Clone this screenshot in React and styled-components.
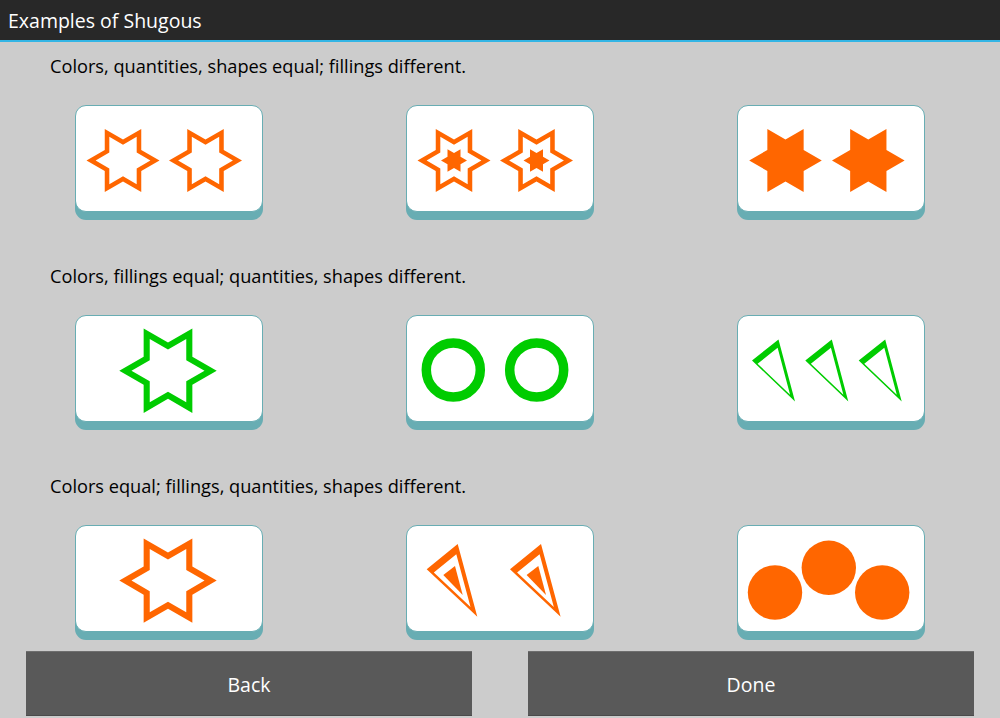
import styled, { createGlobalStyle } from "styled-components";

const ORANGE = "#ff6600";
const GREEN = "#00cc00";
const TEAL = "#68adb3";

const GlobalStyle = createGlobalStyle`
  html, body {
    margin: 0;
    padding: 0;
    background: #cccccc;
    font-family: "Open Sans", "Noto Sans", sans-serif;
  }
`;

// six pointed star, points left/right
function starPoints(cx, cy, r) {
  const pts = [];
  const inner = r / Math.sqrt(3);
  for (let i = 0; i < 12; i++) {
    const a = (i * Math.PI) / 6;
    const rr = i % 2 === 0 ? r : inner;
    pts.push([cx + rr * Math.cos(a), cy + rr * Math.sin(a)]);
  }
  return pts;
}

const toPath = (pts) =>
  "M" + pts.map((p) => p[0].toFixed(2) + " " + p[1].toFixed(2)).join(" L") + " Z";

// triangle whose edges are pushed inwards by a different amount each
function insetTriangle(p, d) {
  const c = [(p[0][0] + p[1][0] + p[2][0]) / 3, (p[0][1] + p[1][1] + p[2][1]) / 3];
  const lines = [0, 1, 2].map((i) => {
    const a = p[i];
    const b = p[(i + 1) % 3];
    const dir = [b[0] - a[0], b[1] - a[1]];
    const len = Math.hypot(dir[0], dir[1]);
    let n = [-dir[1] / len, dir[0] / len];
    if (n[0] * (c[0] - a[0]) + n[1] * (c[1] - a[1]) < 0) n = [-n[0], -n[1]];
    return { pt: [a[0] + n[0] * d[i], a[1] + n[1] * d[i]], dir };
  });
  const cross = (u, v) => u[0] * v[1] - u[1] * v[0];
  return [0, 1, 2].map((i) => {
    const l1 = lines[(i + 2) % 3];
    const l2 = lines[i];
    const diff = [l2.pt[0] - l1.pt[0], l2.pt[1] - l1.pt[1]];
    const t = cross(diff, l2.dir) / cross(l1.dir, l2.dir);
    return [l1.pt[0] + t * l1.dir[0], l1.pt[1] + t * l1.dir[1]];
  });
}

const shift = (pts, dx) => pts.map((p) => [p[0] + dx, p[1]]);

function Shape({ s, color }) {
  switch (s.type) {
    case "starOutline": {
      const outer = starPoints(s.cx, s.cy, s.r);
      const inner = starPoints(s.cx, s.cy, s.r * 0.75);
      return <path d={toPath(outer) + toPath(inner)} fill={color} fillRule="evenodd" />;
    }
    case "starFill":
      return <path d={toPath(starPoints(s.cx, s.cy, s.r))} fill={color} />;
    case "ring":
      return <circle cx={s.cx} cy={s.cy} r={s.r} fill="none" stroke={color} strokeWidth={s.w} />;
    case "circle":
      return <circle cx={s.cx} cy={s.cy} r={s.r} fill={color} />;
    case "triOutline": {
      const outer = shift(s.pts, s.dx);
      const inner = insetTriangle(outer, s.d);
      return <path d={toPath(outer) + toPath(inner)} fill={color} fillRule="evenodd" />;
    }
    case "triFill":
      return <path d={toPath(shift(s.pts, s.dx))} fill={color} />;
    default:
      return null;
  }
}

const greenTri = [[15, 45.5], [41.5, 24.5], [58, 86.5]];
const orangeTri = [[20.7, 44.3], [51.7, 19], [71.3, 91.7]];
const orangeTriInner = [[37.3, 50], [49, 41], [56.7, 70]];

const rows = [
  {
    label: "Colors, quantities, shapes equal; fillings different.",
    cards: [
      {
        color: ORANGE,
        shapes: [
          { type: "starOutline", cx: 48, cy: 55.5, r: 36.5 },
          { type: "starOutline", cx: 130.5, cy: 55.5, r: 36.5 },
        ],
      },
      {
        color: ORANGE,
        shapes: [
          { type: "starOutline", cx: 48, cy: 55.5, r: 36.5 },
          { type: "starFill", cx: 48, cy: 55.5, r: 13 },
          { type: "starOutline", cx: 130.5, cy: 55.5, r: 36.5 },
          { type: "starFill", cx: 130.5, cy: 55.5, r: 13 },
        ],
      },
      {
        color: ORANGE,
        shapes: [
          { type: "starFill", cx: 48.5, cy: 55.5, r: 36.3 },
          { type: "starFill", cx: 131.3, cy: 55.5, r: 36.3 },
        ],
      },
    ],
  },
  {
    label: "Colors, fillings equal; quantities, shapes different.",
    cards: [
      {
        color: GREEN,
        shapes: [{ type: "starOutline", cx: 93, cy: 55.7, r: 48.7 }],
      },
      {
        color: GREEN,
        shapes: [
          { type: "ring", cx: 47.3, cy: 55, r: 27, w: 9.5 },
          { type: "ring", cx: 130.7, cy: 55, r: 27, w: 9.5 },
        ],
      },
      {
        color: GREEN,
        shapes: [0, 53.3, 106.7].map((dx) => ({
          type: "triOutline",
          pts: greenTri,
          dx,
          d: [6, 3, 1.5],
        })),
      },
    ],
  },
  {
    label: "Colors equal; fillings, quantities, shapes different.",
    cards: [
      {
        color: ORANGE,
        shapes: [{ type: "starOutline", cx: 93, cy: 55.6, r: 48.7 }],
      },
      {
        color: ORANGE,
        shapes: [0, 83.3].flatMap((dx) => [
          { type: "triOutline", pts: orangeTri, dx, d: [7, 4, 2.5] },
          { type: "triFill", pts: orangeTriInner, dx },
        ]),
      },
      {
        color: ORANGE,
        shapes: [
          { type: "circle", cx: 38, cy: 67.5, r: 27.2 },
          { type: "circle", cx: 91.8, cy: 42.8, r: 27.2 },
          { type: "circle", cx: 145.2, cy: 67.5, r: 27.2 },
        ],
      },
    ],
  },
];

export default function App() {
  return (
    <>
      <GlobalStyle />
      <Screen>
        <Header>
          <Title>Examples of Shugous</Title>
        </Header>
        <Content>
          {rows.map((row) => (
            <Section key={row.label}>
              <Label>{row.label}</Label>
              <CardRow>
                {row.cards.map((card, i) => (
                  <Card key={i}>
                    <svg width="186" height="105" viewBox="1 1 186 105">
                      {card.shapes.map((s, j) => (
                        <Shape key={j} s={s} color={card.color} />
                      ))}
                    </svg>
                  </Card>
                ))}
              </CardRow>
            </Section>
          ))}
        </Content>
        <Footer>
          <FooterButton>Back</FooterButton>
          <FooterButton>Done</FooterButton>
        </Footer>
      </Screen>
    </>
  );
}

const Screen = styled.div`
  width: 1000px;
  height: 718px;
  display: flex;
  flex-direction: column;
  background: #cccccc;
  overflow: hidden;
`;

const Header = styled.div`
  height: 40px;
  flex-shrink: 0;
  background: #282828;
  border-bottom: 2px solid #33b5e5;
  display: flex;
  align-items: center;
  padding-left: 8px;
`;

const Title = styled.h1`
  margin: 0;
  font-size: 19.5px;
  font-weight: 400;
  color: #ffffff;
`;

const Content = styled.div`
  padding-top: 12px;
  display: flex;
  flex-direction: column;
  gap: 52px;
`;

const Section = styled.div`
  display: flex;
  flex-direction: column;
`;

const Label = styled.p`
  margin: 0 0 27px 50px;
  height: 24px;
  line-height: 24px;
  font-size: 18.2px;
  color: #000000;
`;

const CardRow = styled.div`
  display: grid;
  grid-template-columns: repeat(3, 1fr);
  justify-items: center;
  padding: 0 4px;
`;

const Card = styled.div`
  width: 186px;
  height: 105px;
  background: #ffffff;
  border: 1px solid ${TEAL};
  border-radius: 11px;
  box-shadow: 0 8px 0 0 ${TEAL};

  svg {
    display: block;
  }
`;

const Footer = styled.div`
  display: flex;
  justify-content: space-between;
  padding: 0 26px;
  margin-top: 19px;
`;

const FooterButton = styled.button`
  width: 446px;
  height: 65px;
  background: #595959;
  border: none;
  border-top: 1px solid #6e6e6e;
  border-bottom: 1px solid #4a4a4a;
  color: #ffffff;
  font-family: "Open Sans", "Noto Sans", sans-serif;
  font-size: 19.5px;
  padding: 1px 0 0;
`;
